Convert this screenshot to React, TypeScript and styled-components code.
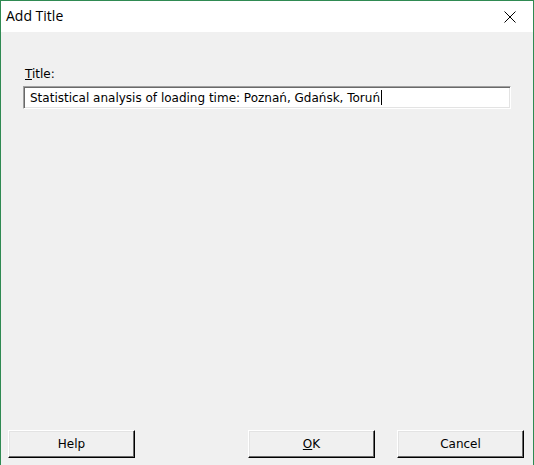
import React from "react";
import styled, { createGlobalStyle } from "styled-components";

const Global = createGlobalStyle`
  html, body { margin: 0; padding: 0; background: #f0f0f0; }
  body { font-family: Tahoma, "DejaVu Sans", sans-serif; }
`;

const uiFont = `"DejaVu Sans", "Liberation Sans", sans-serif`;

const Window = styled.div`
  width: 534px;
  height: 465px;
  box-sizing: border-box;
  border: 1px solid #2f8a52;
  border-bottom: none;
  display: flex;
  flex-direction: column;
  background: #f0f0f0;
  overflow: hidden;
`;

const TitleBar = styled.div`
  height: 31px;
  background: #ffffff;
  display: flex;
  align-items: center;
  justify-content: space-between;
  flex-shrink: 0;
`;

const TitleText = styled.div`
  font-family: "Open Sans", "Noto Sans", sans-serif;
  font-size: 14px;
  color: #000;
  padding-left: 5px;
  padding-bottom: 2px;
`;

const CloseButton = styled.div`
  width: 46px;
  height: 30px;
  display: flex;
  align-items: center;
  justify-content: center;
`;

const Body = styled.div`
  flex: 1;
  display: flex;
  flex-direction: column;
  padding: 35px 8px 7px 7px;
`;

const Label = styled.label`
  font-family: ${uiFont};
  font-size: 12px;
  color: #000;
  margin-left: 17px;
  line-height: 14px;
  u { text-decoration: underline; text-underline-offset: 1px; }
`;

const Field = styled.div`
  margin-left: 15px;
  margin-top: 5px;
  width: 488px;
  height: 23px;
  box-sizing: border-box;
  background: #fff;
  border-top: 1px solid #a0a0a0;
  border-left: 1px solid #a0a0a0;
  border-bottom: 1px solid #ffffff;
  border-right: 1px solid #ffffff;
  box-shadow: inset 1px 1px 0 #696969, inset -1px -1px 0 #e3e3e3;
  display: flex;
  align-items: center;
  padding-left: 6px;
  font-family: ${uiFont};
  font-size: 12px;
  color: #000;
`;

const Caret = styled.span`
  display: inline-block;
  width: 1px;
  height: 15px;
  background: #000;
  margin-left: 1px;
  vertical-align: middle;
`;

const Spacer = styled.div`
  flex: 1;
`;

const ButtonRow = styled.div`
  display: flex;
  align-items: center;
`;

const Button = styled.button<{ $gapBefore?: number }>`
  width: 127px;
  height: 28px;
  margin-left: ${(p) => p.$gapBefore ?? 0}px;
  box-sizing: border-box;
  background: #f0f0f0;
  border-top: 1px solid #ffffff;
  border-left: 1px solid #ffffff;
  border-right: 1px solid #000000;
  border-bottom: 1px solid #000000;
  box-shadow: inset -1px -1px 0 #696969, inset 1px 1px 0 #e3e3e3;
  font-family: ${uiFont};
  font-size: 12px;
  color: #000;
  padding: 0;
  u { text-decoration: underline; text-underline-offset: 1px; }
`;

export default function App() {
  return (
    <>
      <Global />
      <Window>
        <TitleBar>
          <TitleText>Add Title</TitleText>
          <CloseButton>
            <svg width="12" height="12" viewBox="0 0 12 12">
              <path d="M0.5 0.5 L11.5 11.5 M11.5 0.5 L0.5 11.5" stroke="#000" strokeWidth="1" />
            </svg>
          </CloseButton>
        </TitleBar>
        <Body>
          <Label>
            <u>T</u>itle:
          </Label>
          <Field>
            Statistical analysis of loading time: Poznań, Gdańsk, Toruń
            <Caret />
          </Field>
          <Spacer />
          <ButtonRow>
            <Button>Help</Button>
            <Button $gapBefore={113}>
              <u>O</u>K
            </Button>
            <Button $gapBefore={22}>Cancel</Button>
          </ButtonRow>
        </Body>
      </Window>
    </>
  );
}
